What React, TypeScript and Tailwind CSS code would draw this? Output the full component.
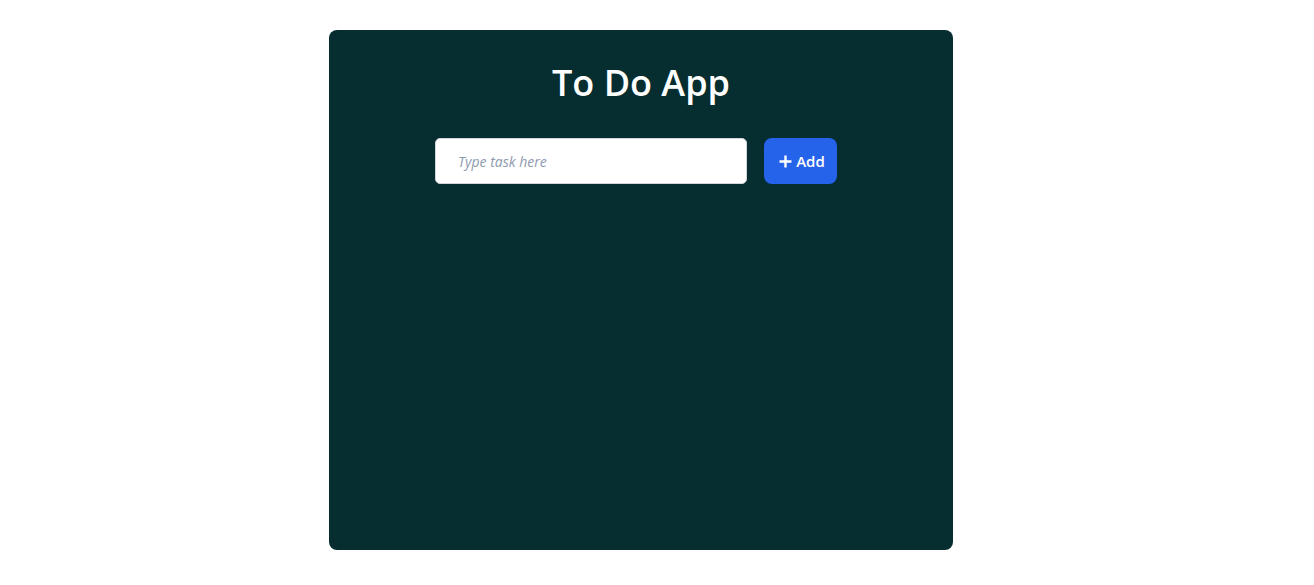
import { useState } from "react";

export default function App() {
  const [task, setTask] = useState("");
  const [tasks, setTasks] = useState<string[]>([]);

  const add = () => {
    if (!task.trim()) return;
    setTasks([...tasks, task.trim()]);
    setTask("");
  };

  return (
    <div className="min-h-[585px] bg-white pt-[30px] font-['Open_Sans',sans-serif]">
      <div className="ml-[329px] h-[520px] w-[624px] rounded-lg bg-[#062d2f] pt-[28px]">
        <h1 className="text-center text-[36px] font-semibold leading-[50px] text-white">To Do App</h1>
        <div className="mt-[30px] flex justify-center gap-[17px] pr-[10px]">
          <input
            value={task}
            onChange={(e) => setTask(e.target.value)}
            placeholder="Type task here"
            className="h-[46px] w-[312px] rounded-[5px] border border-gray-300 bg-white px-[22px] text-[14px] italic text-slate-700 outline-none placeholder:text-[#8e9ab0]"
          />
          <button
            onClick={add}
            className="flex h-[46px] w-[73px] items-center justify-center gap-1 rounded-lg bg-[#2563eb] pl-[3px] text-[15px] font-semibold text-white"
          >
            <svg width="13" height="13" viewBox="0 0 13 13" fill="none" stroke="currentColor" strokeWidth="2.4">
              <path d="M6.5 0.5v12M0.5 6.5h12" />
            </svg>
            Add
          </button>
        </div>
        <ul className="mt-6 px-24 text-white">
          {tasks.map((t, i) => (
            <li key={i} className="py-1">{t}</li>
          ))}
        </ul>
      </div>
    </div>
  );
}
